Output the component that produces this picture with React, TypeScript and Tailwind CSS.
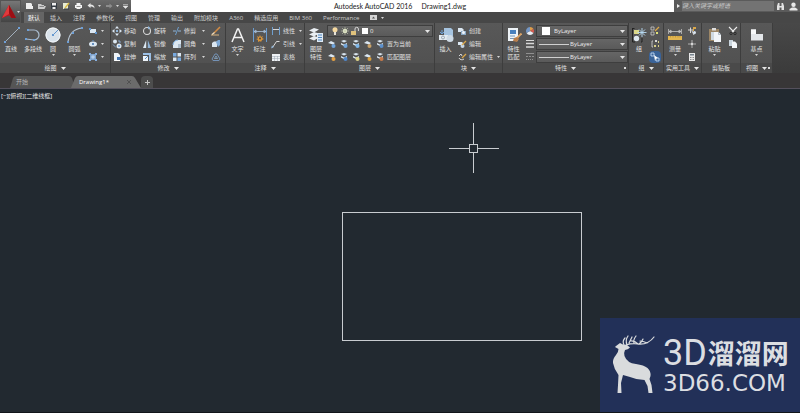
import type { ReactNode } from 'react';

const C = {
  blue: '#8fb4d8',
  pale: '#dbe7f2',
  gray: '#d8d8d8',
  gold: '#dba84a',
};

function Svg({ s = 10, w, h, children }: { s?: number; w?: number; h?: number; children: ReactNode }) {
  const width = w ?? s;
  const height = h ?? s;
  return (
    <svg
      width={width}
      height={height}
      viewBox={`0 0 ${width} ${height}`}
      fill="none"
      className="shrink-0"
      aria-hidden="true"
    >
      {children}
    </svg>
  );
}

function Caret({ small = false }: { small?: boolean }) {
  return small ? (
    <Svg w={3} h={2}>
      <path d="M0 0h3L1.500 2z" fill="#d6d6d6" />
    </Svg>
  ) : (
    <Svg w={5} h={3}>
      <path d="M0 0h5L2.500 3z" fill="#e6e6e6" />
    </Svg>
  );
}

/* ---------- small ribbon icons, 10 x 10 ---------- */
const icons = {
  rect: (
    <Svg>
      <path d="M2 3h6v4H2z" fill={C.pale} />
      <path d="M1 2h2v2H1zM7 6h2v2H7z" fill="#5f95cf" />
    </Svg>
  ),
  ellipse: (
    <Svg>
      <ellipse cx="5" cy="5" rx="4" ry="2.600" fill={C.pale} />
      <circle cx="5" cy="5" r="1" fill="#3f72ad" />
      <path d="M4.500 1h1v1.500h-1z" fill="#5f95cf" />
    </Svg>
  ),
  hatch: (
    <Svg>
      <path d="M2 2h6v6H2z" fill="#7fa3cc" />
      <path d="M1 1h2v2H1zM7 1h2v2H7zM1 7h2v2H1zM7 7h2v2H7z" fill="#86aede" />
      <circle cx="5" cy="5" r="1.800" fill="#b3cdea" />
    </Svg>
  ),
  move: (
    <Svg>
      <path d="M5 0l2 2.500H3zM5 10l2-2.500H3zM0 5l2.500-2v4zM10 5L7.500 3v4z" fill={C.pale} />
      <path d="M4 4h2v2H4z" fill={C.blue} />
    </Svg>
  ),
  copy: (
    <Svg>
      <circle cx="3" cy="2.500" r="2" fill={C.pale} />
      <circle cx="7" cy="7" r="2.500" fill={C.pale} />
      <circle cx="7" cy="7" r="1" fill="#6b9bd0" />
      <path d="M1 5.500l3 3M6 2h2v2" stroke="#8fb8e6" strokeWidth=".8" />
    </Svg>
  ),
  stretch: (
    <Svg>
      <path d="M2 1h4l2 2v6H2z" fill="#edf3f8" />
      <path d="M5 5h4v4H5z" fill="#3f73b0" />
      <path d="M3 8.500h5" stroke="#fff" />
    </Svg>
  ),
  rotate: (
    <Svg>
      <circle cx="5" cy="5" r="3.500" stroke={C.gray} strokeWidth="1.100" />
      <path d="M6 0l2.500 2L6 3.500z" fill={C.blue} />
    </Svg>
  ),
  mirror: (
    <Svg>
      <path d="M4.200 1v8H1z" fill={C.pale} />
      <path d="M5.800 1v8H9z" fill={C.blue} />
    </Svg>
  ),
  scale: (
    <Svg>
      <path d="M1 1h8v8H7V3H1z" fill="#9cc0e6" />
      <path d="M1 4h5v5H1z" fill="#eef4fa" />
      <path d="M3 7l3-3" stroke="#5b92cc" />
    </Svg>
  ),
  trim: (
    <Svg>
      <path d="M1 5h3M6 5h3" stroke={C.blue} />
      <path d="M6.500 1L3.500 9" stroke="#6f9fce" />
    </Svg>
  ),
  fillet: (
    <Svg>
      <path d="M1 9V6a5 5 0 015-5h3v8z" fill={C.pale} />
      <path d="M1 6a5 5 0 015-5" stroke="#7db0e3" />
      <path d="M6 5h3v4H6z" fill="#aebfd0" />
    </Svg>
  ),
  array: (
    <Svg>
      <path d="M1 1h3.500v3.500H1zM5.500 5.500H9V9H5.500z" fill="#77a9e0" />
      <path d="M5.500 1H9v3.500H5.500zM1 5.500h3.500V9H1z" fill={C.pale} />
    </Svg>
  ),
  erase: (
    <Svg>
      <path d="M3 7l6-6" stroke="#d08b45" strokeWidth="1.600" />
      <path d="M0 9h8" stroke="#d9b27c" />
      <path d="M1 8.500l2.500-2" stroke="#f3dfbf" strokeWidth="1.200" />
    </Svg>
  ),
  explode: (
    <Svg>
      <path d="M1 4l2-1.500h3V8H1z" fill={C.pale} />
      <path d="M5 3l2-2h2v5L7 8z" fill="#7fa9d6" />
    </Svg>
  ),
  offset: (
    <Svg>
      <path d="M4 2h2l3 5-1 1.500H2L1 7z" stroke="#7391b5" strokeLinejoin="round" />
      <path d="M5 4l1.500 2.500h-3z" stroke="#8fb4d8" strokeWidth=".7" />
    </Svg>
  ),
  linear: (
    <Svg>
      <path d="M1.500 1v8M8.500 1v8" stroke="#6f9fce" />
      <path d="M2 3.500h6" stroke={C.gray} />
    </Svg>
  ),
  leader: (
    <Svg>
      <path d="M1.500 8.500L5.500 2.500h3" stroke={C.gray} />
      <path d="M0 9.500l1-3 2 1.500z" fill={C.blue} />
    </Svg>
  ),
  table: (
    <Svg>
      <path d="M1 2h8v7H1z" fill="#eef1f4" />
      <path d="M1 4.500h8M1 6.500h8M3.500 4v5M6.500 4v5" stroke="#9aa5b0" strokeWidth=".5" />
    </Svg>
  ),
  bulb: (
    <Svg>
      <circle cx="5" cy="3.700" r="2.500" fill="#f5d9a0" />
      <path d="M4 6h2v3H4z" fill="#e7e3d8" />
    </Svg>
  ),
  sun: (
    <Svg>
      <circle cx="5" cy="5" r="2.200" fill="#e8edd0" />
      <path d="M5 1v8M1 5h8M2 2l6 6M8 2L2 8" stroke="#c7cfae" strokeWidth=".6" />
    </Svg>
  ),
  lock: (
    <Svg>
      <path d="M1 5h5v4H1z" fill="#e0c27c" />
      <path d="M5 5V3a1.700 1.700 0 013.400 0v2" stroke={C.gray} />
    </Svg>
  ),
  block: (
    <Svg>
      <path d="M1 2h4l1.500 1.500V6H1z" fill={C.pale} />
      <path d="M4 5h5v4H4z" fill="#8aa9c6" />
      <circle cx="6.500" cy="6.500" r="1.500" fill="#eef4fa" />
    </Svg>
  ),
  blockEdit: (
    <Svg>
      <path d="M1 3h4l1 1v2H1z" fill={C.pale} />
      <circle cx="5.500" cy="7" r="2" fill="#c5d6e6" />
      <path d="M5 6l4-4" stroke={C.gold} strokeWidth="1.300" />
    </Svg>
  ),
  attrEdit: (
    <Svg>
      <path d="M2 4l2-2 1 2M2 6a3 2.500 0 005 1" stroke={C.gray} />
      <path d="M5 6l4-4" stroke={C.gold} strokeWidth="1.300" />
    </Svg>
  ),
  wheel: (
    <Svg>
      <path d="M5 5V1a4 4 0 013.500 2z" fill="#de9e4b" />
      <path d="M5 5l3.500-2a4 4 0 010 4z" fill="#d65b50" />
      <path d="M5 5l3.500 2A4 4 0 011.500 7z" fill="#e8edf3" />
      <path d="M5 5L1.500 7A4 4 0 015 1z" fill="#7497c6" />
    </Svg>
  ),
  weights: (
    <Svg>
      <path d="M1 1.500h8" stroke={C.gray} />
      <path d="M1 4.500h8M1 8h8" stroke={C.gray} strokeWidth="1.600" />
    </Svg>
  ),
  linetypes: (
    <Svg>
      <path d="M1 1.500h8" stroke="#909090" />
      <path d="M1 4.500h8" stroke="#909090" strokeDasharray="2 1" />
      <path d="M1 7.500h8" stroke="#909090" strokeDasharray="1 1" />
    </Svg>
  ),
  ungroup: (
    <Svg>
      <path d="M1 1h3v3H1zM1 6h3v3H1z" stroke={C.gray} strokeWidth=".7" />
      <path d="M5 5l4-4" stroke={C.gold} strokeWidth="1.300" />
      <path d="M6 6h2v2H6z" fill="#dfe27a" />
    </Svg>
  ),
  groupEdit: (
    <Svg>
      <path d="M2 2v6M2 2h1M2 8h1" stroke={C.gray} strokeWidth=".8" />
      <path d="M5 1h2v2H5z" fill={C.gray} />
      <path d="M4 6h2v2H4zM8 2h1v2H8zM8 6h1v2H8z" fill="#d7cf87" />
    </Svg>
  ),
  groupSel: (
    <Svg>
      <path d="M1 1h3v3H1zM6 6h3v3H6z" stroke="#cfe4fb" strokeWidth=".8" />
      <path d="M4 3l4 3-2 .5L5 9z" fill="#fff" />
    </Svg>
  ),
  quickSel: (
    <Svg>
      <path d="M1 4h5M3.500 1.500V7M5 5l2 4" stroke={C.gray} />
      <path d="M6 1h3v2H7v2H6z" fill={C.gold} />
      <circle cx="7.500" cy="6.500" r="1.500" fill={C.pale} />
    </Svg>
  ),
  point: (
    <Svg>
      <path d="M5 1v8M1 5h8" stroke="#c8c8c8" strokeWidth=".8" />
      <circle cx="5" cy="5" r="1.200" fill={C.gray} />
    </Svg>
  ),
  calc: (
    <Svg>
      <path d="M2 1h6v8H2z" fill="#e8e8e8" />
      <path d="M3 2h4v1.500H3z" fill="#77848f" />
      <path d="M3 5.500h4M3 7.500h4" stroke="#8c8c8c" strokeDasharray="1 .5" />
    </Svg>
  ),
  cut: (
    <Svg>
      <path d="M1 1l5 5M9 1L4 6" stroke="#ededed" strokeWidth="1.100" />
      <circle cx="3" cy="7.500" r="1.200" stroke="#2c2c2c" />
      <circle cx="7" cy="7.500" r="1.200" stroke="#2c2c2c" />
    </Svg>
  ),
  copyDoc: (
    <Svg>
      <path d="M1 1h4v6H1z" fill="#c9d4dd" />
      <path d="M4 2.500h3L9 4.500V9H4z" fill="#f4f7fa" />
    </Svg>
  ),
};

type IconName = keyof typeof icons;

function LayerIcon({ accent, shape }: { accent: string; shape: number }) {
  return (
    <Svg>
      {shape === 0 ? (
        <path d="M1 4l3-2 4 2-2 1.500z" fill={C.pale} />
      ) : (
        <path d="M2 2l3-1 3 1-3 1.500zM2 4l3 1.500L8 4v1.500L5 7 2 5.500z" fill={C.pale} />
      )}
      <circle cx="6.500" cy="7" r="2" fill={accent} />
    </Svg>
  );
}

/* ---------- large ribbon icons ---------- */
const big = {
  line: (
    <Svg s={18}>
      <path d="M3 16L17 2" stroke="#a3afbb" />
      <path d="M2 15h2v2H2zM16 1h2v2h-2z" fill="#6e9fd6" />
    </Svg>
  ),
  polyline: (
    <Svg s={18}>
      <path d="M4 4h6a5 5 0 010 10L2 13" stroke="#a9bccf" strokeWidth="1.200" />
      <path d="M3 3h2v2H3zM1 12h2v2H1zM9 13h2v2H9z" fill="#6e9fd6" />
    </Svg>
  ),
  circle: (
    <Svg s={18}>
      <circle cx="9" cy="9" r="7.500" fill="#d9e2ea" />
      <circle cx="9" cy="9" r="7" stroke="#f3f6f8" />
      <path d="M9 9l5-5" stroke="#5e93cc" />
      <path d="M8 8h2v2H8z" fill="#6598cf" />
    </Svg>
  ),
  arc: (
    <Svg s={18}>
      <path d="M2 16C3 8 8 3 16 2" stroke="#b6c4d2" strokeWidth="1.200" />
      <path d="M1 15h2v2H1zM6 6h2v2H6zM15 1h2v2h-2z" fill="#6e9fd6" />
    </Svg>
  ),
  text: (
    <Svg s={16}>
      <path d="M2 15L7.500 2h1L14 15M4.500 10.500h7" stroke="#f2f2f2" strokeWidth="1.500" />
    </Svg>
  ),
  dimension: (
    <Svg s={16}>
      <path d="M1.500 1v14M14.500 1v14" stroke="#6a9bd0" />
      <path d="M2 4.500h12M2 4.500l2-1.500v3zM14 4.500l-2-1.500v3z" stroke="#a9c3de" strokeWidth=".8" />
      <path d="M5 9l2 1 1-2 1 2 2-1-1 2 2 1-2 1-1 2-1-1-2 1v-2l-2-1 2-.5z" fill="#d8943a" />
      <circle cx="8" cy="11.500" r="1" fill="#4e4a43" />
    </Svg>
  ),
  layers: (
    <Svg s={16}>
      <path d="M1 3.500L6 1l5 1.500-5 3zM1 7.500L6 5l5 1.500-5 3zM1 11.500L6 9l5 1.500-5 3z" fill="#e9eef2" />
      <path d="M9 6h6v9H9z" fill="#dfeaf5" />
      <path d="M10 8h4M10 10.500h4M10 13h4" stroke="#4f86c0" />
    </Svg>
  ),
  insert: (
    <Svg s={18}>
      <path d="M7 2h7l2 2v6H7z" fill="#a6c4e0" />
      <path d="M2 9h9v5H2z" fill="#e4ebf1" />
      <circle cx="13" cy="12.500" r="3.500" fill="#cfdbe6" />
      <path d="M5 4v4M3 6l2 2 2-2" stroke="#6fa4dc" />
      <circle cx="6" cy="11.500" r="1.500" stroke="#7b8b9a" strokeWidth=".7" />
    </Svg>
  ),
  match: (
    <Svg s={16}>
      <path d="M2 1h10v13H2z" fill="#eef3f7" />
      <path d="M4 3h6v4H4z" fill="#4880bd" />
      <path d="M4 9h5M4 11.500h4" stroke="#7998b5" />
      <path d="M15.500 6.500L11 11" stroke="#d9a266" strokeWidth="1.800" />
      <path d="M8 11l3-1 2 2-2 3-4-1z" fill="#b87e4b" />
    </Svg>
  ),
  group: (
    <Svg s={16}>
      <path d="M1 1.500h2.500M1.500 1v14H4M10 15h1V11" stroke="#222" />
      <path d="M3 3h5v4H3z" fill="#dcd98a" />
      <circle cx="5.500" cy="11.500" r="2.700" fill="#dfe9f1" />
      <path d="M11 1v9M6.500 5.500h9M8 2.500l6 6M14 2.500l-6 6" stroke="#b9dcf5" strokeWidth=".9" />
    </Svg>
  ),
  measure: (
    <Svg s={16}>
      <path d="M1.500 2v5M14.500 2v5" stroke="#a9a9a9" />
      <path d="M2 4.500h12M2 4.500l2-1.500v3zM14 4.500l-2-1.500v3z" stroke="#d5d5d5" strokeWidth=".7" />
      <path d="M1 9h14v4H1z" fill="#e3b650" />
      <path d="M3.500 9v1.500M6 9v1.500M8.500 9v1.500M11 9v1.500M13 9v1.500" stroke="#a47c2b" strokeWidth=".5" />
    </Svg>
  ),
  paste: (
    <Svg s={16}>
      <path d="M2 2h10v12H2z" fill="#9c8666" />
      <path d="M5 1h4v2.500H5z" fill="#ddd" />
      <path d="M4 5h5v8H4z" fill="#cfd9e1" />
      <path d="M7 5h4.500L14 7.500V15H7z" fill="#f2f5f8" />
      <path d="M11.500 5v2.500H14" stroke="#8a97a3" strokeWidth=".6" />
    </Svg>
  ),
  base: (
    <Svg s={16}>
      <path d="M2 2.500h5V7h7v6.500H2z" fill="#e3e6e9" />
      <path d="M2 2.500h5V7H2z" fill="#f7f8f9" />
    </Svg>
  ),
};

function Tool({
  icon,
  lines,
  caret,
  className,
}: {
  icon: keyof typeof big;
  lines: string[];
  caret?: boolean;
  className: string;
}) {
  return (
    <button type="button" className={`flex shrink-0 flex-col items-center text-[#e4e4e4] ${className}`}>
      <span className="flex h-5 items-center">{big[icon]}</span>
      {lines.map((l) => (
        <span key={l} className="text-[6px] leading-[8px] whitespace-nowrap">
          {l}
        </span>
      ))}
      {caret && (
        <span className="flex h-1 items-center">
          <Caret small />
        </span>
      )}
    </button>
  );
}

type RowItem = { icon: IconName; text?: string; caret?: boolean; on?: boolean };

function Rows({ items, className = '' }: { items: RowItem[]; className?: string }) {
  return (
    <div className={`flex shrink-0 flex-col gap-px ${className}`}>
      {items.map((it) => (
        <button
          key={it.icon}
          type="button"
          aria-label={it.text ?? it.icon}
          className={`flex h-3 items-center gap-0.5 px-px text-[6px] leading-[8px] whitespace-nowrap text-[#e0e0e0] ${
            it.on ? 'rounded-sm bg-[#3a6398]' : ''
          }`}
        >
          {icons[it.icon]}
          {it.text && <span>{it.text}</span>}
          {it.caret && (
            <span className="ml-auto">
              <Caret small />
            </span>
          )}
        </button>
      ))}
    </div>
  );
}

function Panel({
  title,
  className,
  caret = true,
  launcher,
  children,
}: {
  title: string;
  className: string;
  caret?: boolean;
  launcher?: boolean;
  children: ReactNode;
}) {
  return (
    <section
      className={`flex shrink-0 flex-col border-r border-[#3d3d3d] bg-linear-to-b from-[#585858] to-[#505050] pt-0.5 ${className}`}
    >
      <div className="flex h-[38px]">{children}</div>
      <div className="flex h-2.5 items-center bg-[#4a4a4a] px-0.5">
        <span className="flex-1" />
        <button
          type="button"
          className="flex items-center gap-1 text-[6px] leading-[8px] whitespace-nowrap text-[#e0e0e0]"
        >
          <span>{title}</span>
          {caret && <Caret />}
        </button>
        <span className="flex flex-1 justify-end">
          {launcher && <button type="button" aria-label={`${title}设置`} className="size-0.5 bg-[#dcdcdc]" />}
        </span>
      </div>
    </section>
  );
}

function Combo({ label, value, before }: { label: string; value: string; before: ReactNode }) {
  return (
    <label className="flex h-3 items-center border border-[#3e3e3e] bg-linear-to-b from-[#666] to-[#5a5a5a] px-0.5 text-[#ececec]">
      {before}
      <select
        aria-label={label}
        defaultValue={value}
        className="min-w-0 flex-1 appearance-none bg-transparent text-[6px] leading-[8px] outline-none"
      >
        <option>{value}</option>
      </select>
      <Caret />
    </label>
  );
}

const tabs = [
  '插入', '注释', '参数化', '视图', '管理', '输出', '附加模块', 'A360', '精选应用', 'BIM 360', 'Performance',
];

const layerTools = [
  { text: '置为当前', accents: ['#6fa4dc', '#6fa4dc', '#7db6ea', '#c9a26a', '#5b8fcb'] },
  { text: '匹配图层', accents: ['#e3a044', '#4f86c9', '#ddd487', '#d9a040', '#c77a4a'] },
];

function TitleBar() {
  return (
    <header className="flex h-3 bg-white">
      <div className="flex flex-1">
        <div className="flex h-3 w-[131px] items-center gap-1 bg-linear-to-b from-[#6a6a6a] to-[#555] pl-[25px]">
          <button type="button" aria-label="新建">
            <Svg w={9} h={8}>
              <path d="M1 1h5l1 1v2h1v3H1z" fill="#eee" />
            </Svg>
          </button>
          <button type="button" aria-label="打开">
            <Svg w={8} h={8}>
              <path d="M0 2h3l1 1h2v1h2L6.500 7H0z" fill="#ccc" />
              <path d="M1.500 4.500h4.500" stroke="#666" strokeWidth=".7" />
            </Svg>
          </button>
          <button type="button" aria-label="保存">
            <Svg w={8} h={8}>
              <path d="M1 1h6v6H1z" fill="#353b42" />
              <path d="M2 1h4v2.500H2zM2.500 5h3v2h-3z" fill="#eee" />
            </Svg>
          </button>
          <button type="button" aria-label="另存为">
            <Svg w={8} h={8}>
              <path d="M1 1h5v6H1z" fill="#e7ecd2" />
              <path d="M3 6l4-5" stroke="#dbbb42" strokeWidth="1.300" />
              <path d="M2 7h5" stroke="#343a40" />
            </Svg>
          </button>
          <button type="button" aria-label="打印">
            <Svg w={9} h={8}>
              <path d="M2.500 1h4v2H8v3H6.500v1h-4V6H1V3h1.500z" fill="#f3f3f3" />
              <path d="M2.500 4.500h4" stroke="#666" strokeWidth=".7" />
            </Svg>
          </button>
          <button type="button" aria-label="放弃" className="flex items-center gap-[3px]">
            <Svg w={8} h={8}>
              <path d="M3.500 1v1.500c2.500 0 4 1 4 4C6.500 5 5.500 4.500 3.500 4.500V6L.5 3.500z" fill="#e6e6e6" />
            </Svg>
            <Caret small />
          </button>
          <button type="button" aria-label="重做" className="flex items-center gap-[3px]">
            <Svg w={8} h={8}>
              <path d="M4.500 1.500V3H1v2h3.500v1.500L7.500 4z" fill="#8d8d8d" />
            </Svg>
            <Caret small />
          </button>
          <button type="button" aria-label="自定义快速访问工具栏">
            <Svg w={5} h={5}>
              <path d="M0 .5h5M0 2h5L2.500 4.500z" fill="#e6e6e6" stroke="#e6e6e6" strokeWidth=".5" />
            </Svg>
          </button>
        </div>
      </div>
      <h1 className="flex shrink-0 items-center gap-[9px] font-['Lato',sans-serif] text-[7px] leading-[10px] whitespace-nowrap text-[#222]">
        <span>Autodesk AutoCAD 2016</span>
        <span>Drawing1.dwg</span>
      </h1>
      <div className="flex flex-1 justify-end">
        <div className="flex h-3 w-[126px] items-center bg-[#5b5b5b]">
          <span className="flex w-2 justify-center">
            <Svg w={3} h={4}>
              <path d="M0 0l3 2-3 2z" fill="#eee" />
            </Svg>
          </span>
          <input
            type="text"
            aria-label="搜索"
            placeholder="键入关键字或短语"
            className="h-[10px] min-w-0 flex-1 bg-[#737373] text-[6px] leading-[8px] italic outline-none placeholder:text-[#c9c9c9]"
          />
          <button type="button" aria-label="查找" className="flex w-3 justify-center">
            <Svg w={9} h={9}>
              <path d="M1 8V4l1-3h1.500v3h2V1H7l1 3v4H5.500V5.500h-2V8z" fill="#e3e3e3" />
            </Svg>
          </button>
          <button type="button" aria-label="登录" className="flex w-3.5 justify-center">
            <Svg w={9} h={9}>
              <circle cx="4.500" cy="2.800" r="2.200" fill="#e8e8e8" />
              <path d="M.5 8.500V7l2.500-1.500h3L8.500 7v1.500z" fill="#e8e8e8" />
            </Svg>
          </button>
        </div>
      </div>
    </header>
  );
}

function Ribbon() {
  return (
    <div className="flex h-[50px] overflow-hidden bg-linear-to-b from-[#484848] to-[#3b3b3b]">
      <Panel title="绘图" className="w-[111px]">
        <Tool icon="line" lines={['直线']} className="w-[22px]" />
        <Tool icon="polyline" lines={['多段线']} className="w-[22px]" />
        <Tool icon="circle" lines={['圆']} caret className="w-[18px]" />
        <Tool icon="arc" lines={['圆弧']} caret className="w-[25px]" />
        <Rows
          className="w-[18px]"
          items={[
            { icon: 'rect', caret: true },
            { icon: 'ellipse', caret: true },
            { icon: 'hatch', caret: true },
          ]}
        />
      </Panel>

      <Panel title="修改" className="w-[115px]">
        <Rows
          className="w-[30px]"
          items={[
            { icon: 'move', text: '移动' },
            { icon: 'copy', text: '复制' },
            { icon: 'stretch', text: '拉伸' },
          ]}
        />
        <Rows
          className="w-[30px]"
          items={[
            { icon: 'rotate', text: '旋转' },
            { icon: 'mirror', text: '镜像' },
            { icon: 'scale', text: '缩放' },
          ]}
        />
        <Rows
          className="w-[35px]"
          items={[
            { icon: 'trim', text: '修剪', caret: true },
            { icon: 'fillet', text: '圆角', caret: true },
            { icon: 'array', text: '阵列', caret: true },
          ]}
        />
        <Rows className="pl-1" items={[{ icon: 'erase' }, { icon: 'explode' }, { icon: 'offset' }]} />
      </Panel>

      <Panel title="注释" className="w-[79px]">
        <Tool icon="text" lines={['文字']} caret className="w-[23px]" />
        <Tool icon="dimension" lines={['标注']} className="w-[21px]" />
        <Rows
          className="w-[33px]"
          items={[
            { icon: 'linear', text: '线性', caret: true },
            { icon: 'leader', text: '引线', caret: true },
            { icon: 'table', text: '表格' },
          ]}
        />
      </Panel>

      <Panel title="图层" className="w-[130px]">
        <Tool icon="layers" lines={['图层', '特性']} className="w-[22px]" />
        <div className="flex flex-1 flex-col gap-px pr-px">
          <Combo
            label="图层"
            value="0"
            before={
              <>
                {icons.bulb}
                {icons.sun}
                {icons.lock}
                <span className="mx-0.5 size-1.5 shrink-0 bg-white" />
              </>
            }
          />
          {layerTools.map((row) => (
            <div key={row.text} className="flex h-3 items-center gap-0.5 text-[6px] leading-[8px] text-[#e0e0e0]">
              {row.accents.map((a, i) => (
                <button key={i} type="button" aria-label={`${row.text} ${i + 1}`} className="flex">
                  <LayerIcon accent={a} shape={(i * 2) % 3} />
                </button>
              ))}
              <span className="whitespace-nowrap">{row.text}</span>
            </div>
          ))}
        </div>
      </Panel>

      <Panel title="块" className="w-[68px]">
        <Tool icon="insert" lines={['插入']} className="w-[21px]" />
        <Rows
          className="w-[45px]"
          items={[
            { icon: 'block', text: '创建' },
            { icon: 'blockEdit', text: '编辑' },
            { icon: 'attrEdit', text: '编辑属性', caret: true },
          ]}
        />
      </Panel>

      <Panel title="特性" className="w-[126px]" launcher>
        <Tool icon="match" lines={['特性', '匹配']} className="w-[21px]" />
        <Rows items={[{ icon: 'wheel' }, { icon: 'weights' }, { icon: 'linetypes' }]} />
        <div className="flex flex-1 flex-col gap-px">
          <Combo
            label="对象颜色"
            value="ByLayer"
            before={<span className="mr-1 ml-[3px] size-2 shrink-0 bg-white" />}
          />
          <Combo label="线宽" value="ByLayer" before={<span className="mr-px h-px w-[30px] shrink-0 bg-[#d0d0d0]" />} />
          <Combo label="线型" value="ByLayer" before={<span className="mr-px h-px w-[30px] shrink-0 bg-[#d0d0d0]" />} />
        </div>
      </Panel>

      <Panel title="组" className="w-[35px]">
        <Tool icon="group" lines={['组']} className="w-5" />
        <Rows items={[{ icon: 'ungroup' }, { icon: 'groupEdit' }, { icon: 'groupSel', on: true }]} />
      </Panel>

      <Panel title="实用工具" className="w-[38px]">
        <Tool icon="measure" lines={['测量']} caret className="w-[22px]" />
        <Rows items={[{ icon: 'quickSel' }, { icon: 'point' }, { icon: 'calc' }]} />
      </Panel>

      <Panel title="剪贴板" className="w-[39px]" caret={false}>
        <Tool icon="paste" lines={['粘贴']} caret className="w-[25px]" />
        <Rows items={[{ icon: 'cut' }, { icon: 'copyDoc' }]} />
      </Panel>

      <Panel title="视图" className="w-8" launcher>
        <Tool icon="base" lines={['基点']} caret className="w-full" />
      </Panel>
    </div>
  );
}

function FileTabs() {
  return (
    <nav className="flex h-4 items-end border-b border-[#54505c] bg-[#383637] pl-2.5">
      <button type="button" className="relative flex h-3 w-[65px] items-center pl-1.5 text-[6px] leading-[8px] text-[#b5b5b5]">
        <svg viewBox="0 0 65 12" className="absolute inset-0 size-full" preserveAspectRatio="none" aria-hidden="true">
          <path d="M0 12L3 2Q4 0 6 0h53q2 0 3 2l3 10z" fill="#555" />
        </svg>
        <span className="relative">开始</span>
      </button>
      <button
        type="button"
        className="relative -ml-1 flex h-3 w-[70px] items-center justify-between pr-2.5 pl-2 text-[6px] leading-[8px] text-white"
      >
        <svg viewBox="0 0 70 12" className="absolute inset-0 size-full" preserveAspectRatio="none" aria-hidden="true">
          <path d="M0 12L4 2Q5 0 7 0h54q2 0 3 2l6 10z" fill="#6b6b6b" />
        </svg>
        <span className="relative">Drawing1*</span>
        <span className="relative flex">
          <Svg s={4}>
            <path d="M0 0l4 4M4 0L0 4" stroke="#4a4a4a" strokeWidth=".8" />
          </Svg>
        </span>
      </button>
      <button type="button" aria-label="新图形" className="flex h-3 w-3 items-center justify-center rounded-t bg-[#4d4d4d]">
        <Svg s={5}>
          <path d="M2.500 0v5M0 2.500h5" stroke="#c4c4c4" />
        </Svg>
      </button>
    </nav>
  );
}

function Watermark() {
  return (
    <aside className="absolute right-0 bottom-0 flex h-[94px] w-[200px] items-center bg-[#223058] pl-3 text-[#dcdee2]">
      <svg width="46" height="60" viewBox="0 0 46 60" className="shrink-0" aria-hidden="true">
        <path
          d="M4 11L8 8 11 9.500 15 10 18 12.500Q16 14.500 13 15 11.500 18 12.500 21 15 28 24 29 32 30 35.500 33 39 36 38.500 41L37.500 44 39.500 50 40.500 58H36.500L35.500 51 32.500 45Q25 45 18 42L11 40 9 48 9.500 58H5.500L6 50 6.500 40Q2 34 1 28 .5 24 4 20 6.500 17 6.500 14L3 12Z"
          fill="#d9dbdd"
        />
        <path
          d="M12 10Q10 6 13 3M15 10Q13 5 16 1M14 10Q20 8 26 9 36 10 42 2M17 8L20 2M22 8Q21 5 24 1M27 9Q30 7 31 4M26 9Q22 5 18 6M35 8Q31 6 28 6"
          fill="none"
          stroke="#d9dbdd"
          strokeWidth="1.200"
          strokeLinecap="round"
        />
      </svg>
      <div className="ml-[5px] flex flex-col gap-0.5 pt-0.5">
        <p className="flex items-center gap-px leading-[32px] whitespace-nowrap">
          <span className="font-['Roboto',sans-serif] text-[36px]">3D</span>
          <span className="font-['Noto_Sans_CJK_SC',sans-serif] text-[27px] font-bold">溜溜网</span>
        </p>
        <p className="font-['DejaVu_Sans',sans-serif] text-[23px] leading-[24px] whitespace-nowrap">3D66.COM</p>
      </div>
    </aside>
  );
}

export default function App() {
  return (
    <div className="relative flex min-h-screen flex-col overflow-hidden bg-[#222930] font-['Open_Sans','Noto_Sans_CJK_SC',sans-serif]">
      <TitleBar />

      <button
        type="button"
        aria-label="应用程序菜单"
        className="absolute top-0 left-0 z-10 flex h-[23px] w-[21px] items-center justify-center gap-px border border-[#555] bg-linear-to-b from-[#777] to-[#444]"
      >
        <Svg w={14} h={14}>
          <path d="M7 0L14 13H9.500L7 10.500 0 13z" fill="#c3161c" />
          <path d="M7 0L0 13l7-4z" fill="#e0393c" />
          <path d="M7 8l2.500 5L14 13 7 0z" fill="#9c0f14" />
        </Svg>
        <Caret small />
      </button>

      <nav className="flex h-[11px] items-center gap-[11px] bg-[#474747] pl-[24px] text-[6px] leading-[8px] whitespace-nowrap text-[#cfcfcf]">
        <button type="button" className="-mr-[5px] h-full bg-[#656565] px-1 text-white">
          默认
        </button>
        {tabs.map((t) => (
          <button key={t} type="button">
            {t}
          </button>
        ))}
        <button type="button" aria-label="显示选项" className="flex items-center gap-1">
          <Svg w={7} h={5}>
            <path d="M0 0h7v5H0z" fill="#d5d5d5" />
            <path d="M2 3.500h3L3.500 1.500z" fill="#555" />
          </Svg>
          <Caret small />
        </button>
      </nav>

      <Ribbon />
      <FileTabs />

      <main className="relative flex-1 border-b border-[#11151a]">
        <p className="px-px pt-[3px] text-[6px] leading-[8px] text-[#e8e8e8]">[−][俯视][二维线框]</p>
        <svg className="absolute inset-0 size-full" aria-hidden="true">
          <g fill="none" stroke="#c9ccd0" shapeRendering="crispEdges">
            <rect x="342.500" y="123.500" width="239" height="128" />
            <path d="M449 59.500h20M478 59.500h21M473.500 34v21M473.500 64v20" />
            <rect x="469.500" y="55.500" width="8" height="8" />
          </g>
        </svg>
        <Watermark />
      </main>
    </div>
  );
}
